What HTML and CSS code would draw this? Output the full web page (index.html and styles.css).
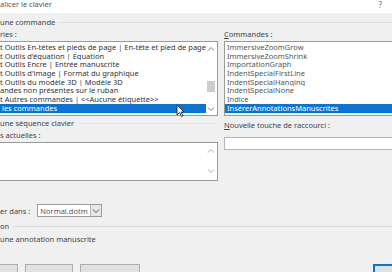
FILE: index.html
```html
<!DOCTYPE html>
<html lang="fr">
<head>
    <meta charset="UTF-8">
    <meta name="viewport" content="width=device-width, initial-scale=1.0">
    <title>Personnaliser le clavier</title>
    <link rel="stylesheet" href="styles.css">
</head>
<body>
    <div class="titlebar">
        <span>alicer le clavier</span>
        <span class="help">?</span>
    </div>

    <div class="dialog">
        <div class="group-head"><span>une commande</span></div>

        <div class="cols">
            <div class="col">
                <div class="label">ries :</div>
                <div class="listbox">
                    <ul class="items">
                        <li>t Outils En-têtes et pieds de page | En-tête et pied de page</li>
                        <li>t Outils d'équation | Équation</li>
                        <li>t Outils Encre | Entrée manuscrite</li>
                        <li>t Outils d'image | Format du graphique</li>
                        <li>t Outils du modèle 3D | Modèle 3D</li>
                        <li>andes non présentes sur le ruban</li>
                        <li>t Autres commandes | &lt;&lt;Aucune étiquette&gt;&gt;</li>
                        <li class="selected">&nbsp;les commandes</li>
                    </ul>
                    <div class="scrollbar">
                        <svg class="arrow" width="8" height="6" viewBox="0 0 8 6"><path d="M1 4.5 L4 1.5 L7 4.5" fill="none" stroke="#777" stroke-width="1"/></svg>
                        <div class="track"><div class="thumb"></div></div>
                        <svg class="arrow" width="8" height="6" viewBox="0 0 8 6"><path d="M1 1.5 L4 4.5 L7 1.5" fill="none" stroke="#777" stroke-width="1"/></svg>
                    </div>
                    <svg class="cursor" width="9" height="13" viewBox="0 0 9 13"><path d="M1 1 L1 11 L3.5 8.5 L5.5 12.5 L7 11.8 L5 8 L8 8 Z" fill="#fff" stroke="#222" stroke-width="0.9"/></svg>
                </div>
            </div>
            <div class="col">
                <div class="label"><u>C</u>ommandes :</div>
                <div class="listbox">
                    <ul class="items cmds">
                        <li>ImmersiveZoomGrow</li>
                        <li>ImmersiveZoomShrink</li>
                        <li>ImportationGraph</li>
                        <li>IndentSpecialFirstLine</li>
                        <li>IndentSpecialHanging</li>
                        <li>IndentSpecialNone</li>
                        <li>Indice</li>
                        <li class="selected">InsérerAnnotationsManuscrites</li>
                    </ul>
                </div>
            </div>
        </div>

        <div class="cols">
            <div class="col">
                <div class="group-head short"><span>une séquence clavier</span></div>
                <div class="label">s actuelles :</div>
                <div class="listbox keys-box">
                    <div class="items"></div>
                    <div class="scrollbar">
                        <svg class="arrow" width="8" height="6" viewBox="0 0 8 6"><path d="M1 4.5 L4 1.5 L7 4.5" fill="none" stroke="#aaa" stroke-width="1"/></svg>
                        <div class="track"></div>
                        <svg class="arrow" width="8" height="6" viewBox="0 0 8 6"><path d="M1 1.5 L4 4.5 L7 1.5" fill="none" stroke="#aaa" stroke-width="1"/></svg>
                    </div>
                </div>
            </div>
            <div class="col new-key">
                <div class="label"><u>N</u>ouvelle touche de raccourci :</div>
                <div class="input"></div>
            </div>
        </div>

        <div class="save-row">
            <span>er dans :</span>
            <div class="combo">
                <span>Normal.dotm</span>
                <span class="drop"><svg width="8" height="6" viewBox="0 0 8 6"><path d="M1 1.5 L4 4.5 L7 1.5" fill="none" stroke="#555" stroke-width="1"/></svg></span>
            </div>
        </div>

        <div class="group-head"><span>on</span></div>
        <div class="desc">une annotation manuscrite</div>

        <div class="buttons">
            <div class="btn first"></div>
            <div class="btn"></div>
            <div class="btn wide"></div>
            <div class="btn primary"></div>
        </div>
    </div>
</body>
</html>
```

FILE: styles.css
```css
body {
    margin: 0;
    background-color: #f0f0f0;
    font-family: "Noto Sans", "Open Sans", sans-serif;
    font-size: 7.5px;
    color: #444;
    overflow: hidden;
    width: 392px;
    height: 272px;
}

.titlebar {
    background: white;
    height: 13px;
    line-height: 9px;
    display: flex;
    justify-content: space-between;
    padding-right: 10px;
    color: #555;
}

.titlebar .help {
    font-size: 8px;
    color: #666;
}

.dialog {
    width: 440px;
}

.group-head {
    display: flex;
    align-items: center;
    gap: 4px;
    line-height: 10px;
    margin-top: 4px;
}

.group-head::after {
    content: "";
    flex: 1;
    height: 1px;
    background: #dcdcdc;
}

.group-head.short {
    margin-top: 2px;
}

.group-head.short::after {
    background: #e6e6e6;
}

.cols {
    display: grid;
    grid-template-columns: 218px 1fr;
    gap: 6px;
}

.label {
    line-height: 10px;
    margin-top: 2px;
    margin-bottom: 2px;
}

.listbox {
    position: relative;
    height: 75px;
    box-sizing: border-box;
    background: white;
    border: 1px solid #9a9a9a;
    border-left: none;
    display: flex;
}

.col:last-child .listbox {
    border-left: 1px solid #9a9a9a;
    border-right: none;
}

.items {
    list-style: none;
    margin: 0;
    padding: 1px 0 0 0;
    flex: 1;
    color: #333;
}

.items li {
    height: 8.7px;
    line-height: 8.7px;
    white-space: nowrap;
    overflow: hidden;
}

.cmds li {
    padding-left: 2px;
    color: #555;
}

.items li.selected {
    background-color: #0a74d6;
    color: white;
}

.scrollbar {
    width: 12px;
    display: flex;
    flex-direction: column;
    align-items: center;
    padding: 4px 0 3px;
}

.track {
    flex: 1;
    width: 8px;
    position: relative;
}

.thumb {
    position: absolute;
    left: 0;
    top: 29px;
    width: 8px;
    height: 11px;
    background: #cdcdcd;
}

.cursor {
    position: absolute;
    left: 176px;
    top: 62px;
}

.keys-box {
    height: 39px;
}

.keys-box .scrollbar {
    padding: 5px 0 6px;
}

.new-key {
    padding-top: 2px;
}

.input {
    margin-top: 7px;
    height: 13px;
    box-sizing: border-box;
    background: white;
    border: 1px solid #b5b5b5;
    border-right: none;
}

.save-row {
    display: flex;
    align-items: center;
    gap: 7px;
    margin-top: 23px;
    height: 13px;
}

.combo {
    width: 65px;
    height: 13px;
    box-sizing: border-box;
    border: 1px solid #9a9a9a;
    background: white;
    display: flex;
    align-items: center;
    justify-content: space-between;
    padding-left: 2px;
    color: #555;
}

.drop {
    width: 11px;
    height: 11px;
    box-sizing: border-box;
    border-left: 1px solid #b5b5b5;
    background: #e8e8e8;
    display: flex;
    align-items: center;
    justify-content: center;
}

.desc {
    line-height: 10px;
    margin-top: 3px;
}

.buttons {
    display: flex;
    gap: 7px;
    margin-top: 20px;
}

.btn {
    width: 48px;
    height: 20px;
    box-sizing: border-box;
    border: 1px solid #adadad;
    background: #e1e1e1;
}

.btn.first {
    width: 50px;
    margin-left: -32px;
}

.btn.wide {
    width: 60px;
}

.btn.primary {
    margin-left: auto;
    width: 67px;
    border: 2px solid #0078d7;
}
```
